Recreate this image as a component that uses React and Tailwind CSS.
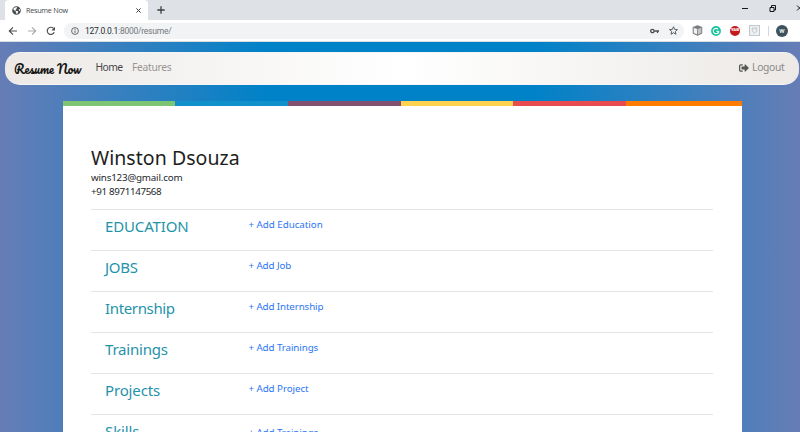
import React from 'react';
import { FaSignOutAlt, FaGlobeAmericas } from 'react-icons/fa';

const sections = [
  { title: 'EDUCATION', add: '+ Add Education', head: 'tracking-[-0.15px]', link: 'tracking-[-0.04px]', top: 'pt-[8px]' },
  { title: 'JOBS', add: '+ Add Job', head: 'tracking-[-0.3px]', link: 'tracking-[-0.1px]', top: 'pt-[8px]' },
  { title: 'Internship', add: '+ Add Internship', head: 'tracking-[-0.35px]', link: 'tracking-[-0.12px]', top: 'pt-[8px]' },
  { title: 'Trainings', add: '+ Add Trainings', head: 'tracking-[-0.2px]', link: 'tracking-[-0.1px]', top: 'pt-[8px]' },
  { title: 'Projects', add: '+ Add Project', head: 'tracking-[-0.15px]', link: 'tracking-[-0.08px]', top: 'pt-[8px]' },
  { title: 'Skills', add: '+ Add Trainings', head: 'tracking-[-0.1px]', link: 'tracking-[-0.1px]', top: 'pt-[11px]' },
];

const stripes = ['bg-[#7dc473]', 'bg-[#1191cc]', 'bg-[#84506f]', 'bg-[#ffd34f]', 'bg-[#e84c50]', 'bg-[#ff7c00]'];

function TabStrip() {
  return (
    <div className="flex h-5 bg-[#dee1e6]">
      <div className="ml-[5px] flex w-[143px] items-center rounded-t-[4px] bg-white pl-[7px] pr-[7px]">
        <FaGlobeAmericas className="size-[9px] text-[#4b4f54]" />
        <span className="ml-[5px] text-[7.3px] leading-[10px] tracking-[-0.3px] text-[#45494d]">Resume Now</span>
        <svg className="ml-auto size-[5px]" viewBox="0 0 5 5" stroke="#3c4043" strokeWidth="1">
          <path d="M.4.4l4.2 4.2M4.6.4L.4 4.6" />
        </svg>
      </div>
      <svg className="ml-[9px] mt-[6px] size-[8px]" viewBox="0 0 8 8" stroke="#3c4043" strokeWidth="1.3">
        <path d="M4 .3v7.4M.3 4h7.4" />
      </svg>
      <svg className="ml-auto mt-[4px] h-[9px] w-[58px]" viewBox="0 0 58 9" fill="none" stroke="#15171a" strokeWidth="1">
        <path d="M0 4.5h6" />
        <path d="M28 3.5h4v4h-4zM29.5 3.5v-2h4v4.5h-1.5" />
        <path d="M55 1.5l5 5M55 6.5l5-5" />
      </svg>
    </div>
  );
}

function Toolbar() {
  return (
    <div className="flex h-[22px] items-center border-b border-[#d9dce0] bg-white">
      <svg className="ml-[8px] h-[10px] w-[48px]" viewBox="0 0 48 10" fill="none" strokeWidth="1.2">
        <path stroke="#4b4f54" d="M9 5H1.5M5 1.3L1.3 5 5 8.7" />
        <path stroke="#a9acb0" d="M20 5h7.5M24 1.3L27.7 5 24 8.7" />
        <path stroke="#4b4f54" d="M46.2 6.2A3.6 3.6 0 1 1 45.5 2.4" />
        <path fill="#4b4f54" d="M47 .8v3.6h-3.6z" />
      </svg>
      <div className="ml-[8px] flex h-4 w-[620px] items-center rounded-full bg-[#f1f3f4] pl-[7px] pr-[6px]">
        <svg className="size-[8px]" viewBox="0 0 8 8" fill="none" stroke="#55595e">
          <circle cx="4" cy="4" r="3.4" strokeWidth=".9" />
          <path d="M4 3.5v2.3M4 1.9v.9" />
        </svg>
        <span className="ml-[6px] whitespace-nowrap font-[Roboto,sans-serif] text-[8.5px] leading-[12px] tracking-[-0.25px] text-[#73777c]">
          <span className="text-[#2a2d31]">127.0.0.1</span>:8000/resume/
        </span>
        <svg className="ml-auto h-[6px] w-[9px]" viewBox="0 0 9 6" fill="none" stroke="#4b4f54" strokeWidth="1.3">
          <circle cx="2.4" cy="3" r="1.7" />
          <path d="M4.2 3H9M7.5 3v2" />
        </svg>
        <svg className="ml-[10px] size-[9px]" viewBox="0 0 24 24" fill="none" stroke="#4b4f54" strokeWidth="2.4">
          <path d="M12 2l3 7 7.5.6-5.7 5 1.8 7.4L12 18l-6.6 4 1.8-7.4-5.7-5L9 9z" />
        </svg>
      </div>
      <svg className="ml-[8px] size-[11px]" viewBox="0 0 11 11" stroke="#7b7e81" strokeWidth=".6">
        <path fill="#77797c" d="M5.5.6l4.4 1.6v6.2L5.5 10.4 1 8.4V2.2z" />
        <path fill="#f2f2f2" d="M1.4 2.4l4.1 1.4v6L1.4 8.2z" />
        <path fill="#c4c5c6" d="M9.6 2.4L5.5 3.8v6l4.1-1.6z" />
      </svg>
      <svg className="ml-[8px] size-[10px]" viewBox="0 0 10 10" fill="none">
        <circle cx="5" cy="5" r="4.9" fill="#15c39a" />
        <path stroke="#fff" strokeWidth="1.1" d="M7 3.2A2.7 2.7 0 1 0 7.7 5.3H5.3M7.6 5.3V7.4" />
      </svg>
      <div className="ml-[9px] flex size-[10px] items-center justify-center rounded-full bg-[#c5191d] font-[Roboto,sans-serif] text-[4.3px] font-black leading-none text-white">YAB</div>
      <svg className="ml-[9px] size-[11px]" viewBox="0 0 11 11" fill="none" stroke="#c4c8cd">
        <rect x=".5" y=".5" width="10" height="10" fill="#edf0f2" />
        <path d="M3.3 2.8h1.4v.8h1.8v-.8h1.2v3.4L5.5 8 3.3 6.2z" />
      </svg>
      <div className="ml-[8px] h-[10px] w-px bg-[#d5d7db]" />
      <div className="ml-[7px] flex size-3 items-center justify-center rounded-full bg-[#3d525e] font-[Roboto,sans-serif] text-[6px] font-medium leading-none text-white">W</div>
    </div>
  );
}

function Navbar() {
  return (
    <nav className="ml-[5px] mr-[1.5px] mt-[10px] flex h-[33px] items-center rounded-[15px] border-y border-[#f5f5f5] bg-[linear-gradient(90deg,#ece9e6,#ffffff_50%,#ece9e6)] pl-[9px] pr-[14px] font-['Noto_Sans',sans-serif] text-[10.3px]">
      <span className="w-[72px] whitespace-nowrap font-['Pacifico',cursive] text-[12.1px] leading-[24px] text-[#141414]">Resume Now</span>
      <span className="mb-[2px] ml-[9.5px] w-[36.5px] whitespace-nowrap tracking-[-0.6px] text-[#484848]">Home</span>
      <span className="mb-[2px] whitespace-nowrap tracking-[-0.3px] text-[#979694]">Features</span>
      <span className="mb-[2px] ml-auto flex items-center whitespace-nowrap tracking-[-0.3px] text-[#8b8987]">
        <FaSignOutAlt className="mr-[3px] size-[10px] text-[#555]" />
        Logout
      </span>
    </nav>
  );
}

function Resume() {
  return (
    <main className="ml-[62.5px] mt-[16px] w-[679px] bg-white font-['Noto_Sans',sans-serif]">
      <div className="grid h-[5px] grid-cols-[repeat(5,112.7px)_1fr]">
        {stripes.map((color) => (
          <div key={color} className={color} />
        ))}
      </div>
      <div className="pl-[28.5px] pr-[28.5px] pt-[38px]">
        <header className="flex h-[65px] flex-col items-start whitespace-nowrap text-[#25282b]">
          <h1 className="text-[19.5px] font-normal leading-[27px] tracking-[0.05px] text-[#1c1e20]">Winston Dsouza</h1>
          <p className="text-[9.8px] leading-[14px] tracking-[-0.2px]">wins123@gmail.com</p>
          <p className="text-[9.8px] leading-[14px] tracking-[-0.36px]">+91 8971147568</p>
        </header>
        {sections.map((s) => (
          <section key={s.title} className="flex h-[41px] border-t border-[#e3e4e5] pl-[14px]">
            <h2 className="w-[143.5px] whitespace-nowrap pt-[5px] text-[15px] leading-[22px] text-[#1f93a9]">
              <span className={s.head}>{s.title}</span>
            </h2>
            <a className={`whitespace-nowrap text-[9.8px] leading-[14px] text-[#2c76f5] ${s.top}`}>
              <span className={s.link}>{s.add}</span>
            </a>
          </section>
        ))}
      </div>
    </main>
  );
}

export default function App() {
  return (
    <div className="h-[432px] w-[800px] overflow-hidden bg-[linear-gradient(90deg,#667db6,#0082c8_33.3%,#0082c8_66.6%,#667db6)] font-['Open_Sans',sans-serif]">
      <TabStrip />
      <Toolbar />
      <Navbar />
      <Resume />
    </div>
  );
}
